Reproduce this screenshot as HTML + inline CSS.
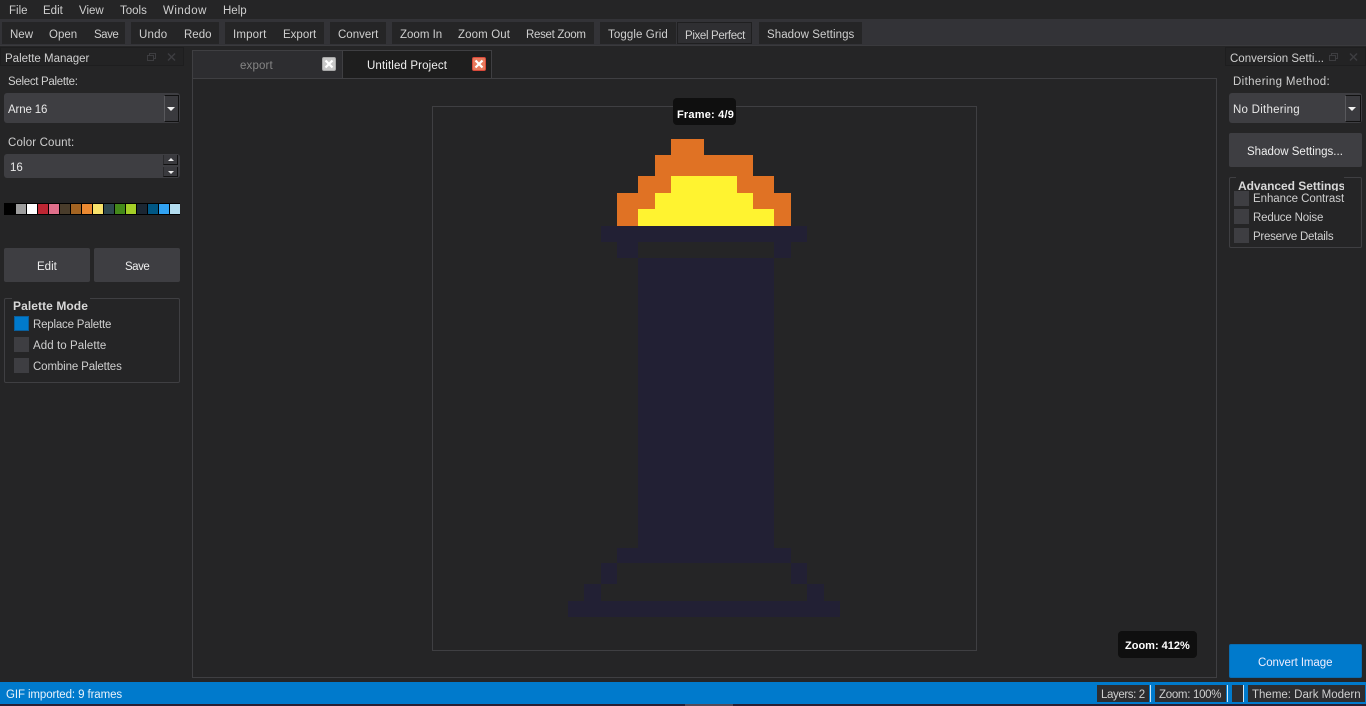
<!DOCTYPE html>
<html><head><meta charset="utf-8">
<style>
html,body{margin:0;padding:0;width:1366px;height:706px;overflow:hidden;background:#252526}
body{position:relative;font-family:"Liberation Sans",sans-serif;font-size:11.5px;color:#cfcfcf}
.b{position:absolute;box-sizing:border-box}
.t{position:absolute;white-space:nowrap;line-height:14px;margin-top:1px}
.p{position:absolute}
</style></head><body>
<!-- menu -->
<div class="b" style="left:0;top:0;width:1366px;height:19px;background:#252526"></div>
<span class="t" style="left:9px;top:3px">File</span>
<span class="t" style="left:43px;top:3px">Edit</span>
<span class="t" style="left:79px;top:3px">View</span>
<span class="t" style="left:120px;top:3px">Tools</span>
<span class="t" style="left:163px;top:3px;letter-spacing:.5px">Window</span>
<span class="t" style="left:223px;top:3px">Help</span>
<!-- toolbar -->
<div class="b" style="left:0;top:19px;width:1366px;height:27px;background:#333337;border-bottom:1px solid #3a3a3d"></div>
<div class="b" style="left:2px;top:22px;width:123px;height:22px;background:#252526"></div>
<div class="b" style="left:131px;top:22px;width:88px;height:22px;background:#252526"></div>
<div class="b" style="left:225px;top:22px;width:99px;height:22px;background:#252526"></div>
<div class="b" style="left:330px;top:22px;width:56px;height:22px;background:#252526"></div>
<div class="b" style="left:392px;top:22px;width:202px;height:22px;background:#252526"></div>
<div class="b" style="left:600px;top:22px;width:76px;height:22px;background:#252526"></div>
<div class="b" style="left:677px;top:22px;width:75px;height:22px;background:#2f2f32;border:1px solid #1f1f20"></div>
<div class="b" style="left:759px;top:22px;width:103px;height:22px;background:#252526"></div>
<span class="t" style="left:10px;top:27px">New</span>
<span class="t" style="left:49px;top:27px">Open</span>
<span class="t" style="left:94px;top:27px;letter-spacing:-.5px">Save</span>
<span class="t" style="left:139px;top:27px;letter-spacing:.2px">Undo</span>
<span class="t" style="left:184px;top:27px">Redo</span>
<span class="t" style="left:233px;top:27px;letter-spacing:.15px">Import</span>
<span class="t" style="left:283px;top:27px">Export</span>
<span class="t" style="left:338px;top:27px">Convert</span>
<span class="t" style="left:400px;top:27px">Zoom In</span>
<span class="t" style="left:458px;top:27px;letter-spacing:.12px">Zoom Out</span>
<span class="t" style="left:526px;top:27px;letter-spacing:-.3px">Reset Zoom</span>
<span class="t" style="left:608px;top:27px;letter-spacing:.1px">Toggle Grid</span>
<span class="t" style="left:685px;top:28px;letter-spacing:-.35px">Pixel Perfect</span>
<span class="t" style="left:767px;top:27px;letter-spacing:.07px">Shadow Settings</span>
<!-- left panel -->
<div class="b" style="left:0;top:47px;width:184px;height:19px;background:#232324;border:1px solid #1e1e1f"></div>
<span class="t" style="left:5px;top:51px">Palette Manager</span>
<svg class="p" style="left:146px;top:52px" width="30" height="11" fill="none" stroke="#3d3d40"><rect x="1.5" y="3.5" width="6" height="5"/><path d="M3.5 3V1.500H9.500V6.500H8"/><path d="M22 1.500l7 7M29 1.500l-7 7" stroke-width="1.500"/></svg>
<span class="t" style="left:8px;top:74px;letter-spacing:-.3px">Select Palette:</span>
<div class="b" style="left:4px;top:93px;width:176px;height:30px;background:#3e3e42;border-radius:3px"></div>
<div class="b" style="left:164px;top:95px;width:15px;height:27px;background:#3a3a3e;border-left:1px solid #58585c;border-right:1px solid #111;border-bottom:1px solid #111;border-top:1px solid #111"></div>
<div class="b" style="left:167px;top:107px;width:0;height:0;border-left:4px solid transparent;border-right:4px solid transparent;border-top:4px solid #f0f0f0"></div>
<span class="t" style="left:8px;top:102px;color:#e8e8e8;letter-spacing:-.15px">Arne 16</span>
<span class="t" style="left:8px;top:135px;letter-spacing:.15px">Color Count:</span>
<div class="b" style="left:4px;top:154px;width:176px;height:24px;background:#3e3e42;border-radius:3px"></div>
<div class="b" style="left:163px;top:155px;width:15px;height:10px;background:#3a3a3e;border-right:1px solid #111;border-bottom:1px solid #111;border-left:1px solid #2a2a2c"></div>
<div class="b" style="left:163px;top:167px;width:15px;height:10px;background:#3a3a3e;border-right:1px solid #111;border-bottom:1px solid #111;border-left:1px solid #2a2a2c"></div>
<div class="b" style="left:168px;top:158px;width:0;height:0;border-left:3px solid transparent;border-right:3px solid transparent;border-bottom:3px solid #eee"></div>
<div class="b" style="left:168px;top:171px;width:0;height:0;border-left:3px solid transparent;border-right:3px solid transparent;border-top:3px solid #eee"></div>
<span class="t" style="left:10px;top:160px;color:#e8e8e8">16</span>
<!-- palette -->
<div class="b" style="left:4px;top:203px;width:176px;height:12px;background:#000"></div>
<div class="p" style="left:4px;top:204px;width:11px;height:10px;background:#000"></div>
<div class="p" style="left:16px;top:204px;width:10px;height:10px;background:#9d9d9d"></div>
<div class="p" style="left:27px;top:204px;width:10px;height:10px;background:#fff"></div>
<div class="p" style="left:38px;top:204px;width:10px;height:10px;background:#be2633"></div>
<div class="p" style="left:49px;top:204px;width:10px;height:10px;background:#e06f8b"></div>
<div class="p" style="left:60px;top:204px;width:10px;height:10px;background:#493c2b"></div>
<div class="p" style="left:71px;top:204px;width:10px;height:10px;background:#a46422"></div>
<div class="p" style="left:82px;top:204px;width:10px;height:10px;background:#eb8931"></div>
<div class="p" style="left:93px;top:204px;width:10px;height:10px;background:#f7e26b"></div>
<div class="p" style="left:104px;top:204px;width:10px;height:10px;background:#2f484e"></div>
<div class="p" style="left:115px;top:204px;width:10px;height:10px;background:#44891a"></div>
<div class="p" style="left:126px;top:204px;width:10px;height:10px;background:#a3ce27"></div>
<div class="p" style="left:137px;top:204px;width:10px;height:10px;background:#1b2632"></div>
<div class="p" style="left:148px;top:204px;width:10px;height:10px;background:#005784"></div>
<div class="p" style="left:159px;top:204px;width:10px;height:10px;background:#31a2f2"></div>
<div class="p" style="left:170px;top:204px;width:10px;height:10px;background:#b2dcef"></div>
<div class="b" style="left:4px;top:248px;width:86px;height:34px;background:#3e3e42;border-radius:2px"></div>
<div class="b" style="left:94px;top:248px;width:86px;height:34px;background:#3e3e42;border-radius:2px"></div>
<span class="t" style="left:37px;top:259px;color:#eee">Edit</span>
<span class="t" style="left:125px;top:259px;color:#eee;letter-spacing:-.5px">Save</span>
<!-- palette mode -->
<div class="b" style="left:4px;top:298px;width:176px;height:85px;border:1px solid #3f3f42;border-radius:2px"></div>
<div class="b" style="left:12px;top:296px;width:78px;height:4px;background:#252526"></div>
<span class="t" style="left:13px;top:298px;font-weight:bold;font-size:12px;color:#d8d8d8;letter-spacing:.08px">Palette Mode</span>
<div class="b" style="left:14px;top:316px;width:15px;height:15px;background:#007acc;border:1px solid #0a5f9c"></div>
<div class="b" style="left:14px;top:337px;width:15px;height:15px;background:#3e3e42"></div>
<div class="b" style="left:14px;top:358px;width:15px;height:15px;background:#3e3e42"></div>
<span class="t" style="left:33px;top:317px;letter-spacing:-.2px">Replace Palette</span>
<span class="t" style="left:33px;top:338px;letter-spacing:.08px">Add to Palette</span>
<span class="t" style="left:33px;top:359px;letter-spacing:-.13px">Combine Palettes</span>
<!-- tabs -->
<div class="b" style="left:192px;top:50px;width:150px;height:29px;background:#2d2d30;border-left:1px solid #3f3f42;border-top:1px solid #3f3f42"></div>
<div class="b" style="left:342px;top:50px;width:150px;height:29px;background:#1e1e1e;border-left:1px solid #3f3f42;border-right:1px solid #3f3f42;border-top:1px solid #3f3f42"></div>
<span class="t" style="left:240px;top:58px;color:#858585;letter-spacing:.15px">export</span>
<span class="t" style="left:367px;top:58px;color:#f0f0f0;letter-spacing:.13px">Untitled Project</span>
<svg class="p" style="left:322px;top:57px" width="14" height="14"><rect x=".5" y=".5" width="13" height="13" rx="1.500" fill="#c8c8c8" stroke="#a8a8a8"/><path d="M3.500 3.500l7 7M10.500 3.500l-7 7" stroke="#fff" stroke-width="2.200"/></svg>
<svg class="p" style="left:472px;top:57px" width="14" height="14"><rect x=".5" y=".5" width="13" height="13" rx="1.500" fill="#e87a5d" stroke="#d9493a"/><path d="M3.500 3.500l7 7M10.500 3.500l-7 7" stroke="#fff" stroke-width="2.200"/></svg>
<!-- pane -->
<div class="b" style="left:192px;top:78px;width:1025px;height:600px;border:1px solid #3f3f42"></div>
<div class="b" style="left:432px;top:106px;width:545px;height:545px;border:1px solid #3f3f42"></div>
<!-- sprite -->
<svg class="p" style="left:0;top:0" width="1366" height="706" shape-rendering="crispEdges">
<g fill="#e07224">
<rect x="671" y="139" width="33" height="16"/>
<rect x="655" y="155" width="98" height="21"/>
<rect x="638" y="176" width="136" height="17"/>
<rect x="617" y="193" width="174" height="33"/>
</g>
<g fill="#fff330">
<rect x="671" y="176" width="66" height="17"/>
<rect x="655" y="193" width="98" height="16"/>
<rect x="638" y="209" width="136" height="17"/>
</g>
<g fill="#222034">
<rect x="601" y="226" width="206" height="16"/>
<rect x="617" y="242" width="21" height="16"/>
<rect x="774" y="242" width="17" height="16"/>
<rect x="638" y="258" width="136" height="290"/>
<rect x="617" y="548" width="174" height="15"/>
<rect x="601" y="563" width="16" height="21"/>
<rect x="791" y="563" width="16" height="21"/>
<rect x="584" y="584" width="17" height="17"/>
<rect x="807" y="584" width="17" height="17"/>
<rect x="568" y="601" width="272" height="16"/>
</g>
</svg>
<!-- overlays -->
<div class="b" style="left:673px;top:98px;width:63px;height:27px;background:#0f0f0f;border-radius:4px"></div>
<span class="t" style="left:677px;top:107px;font-weight:bold;font-size:11px;color:#fff;letter-spacing:.2px">Frame: 4/9</span>
<div class="b" style="left:1118px;top:631px;width:79px;height:27px;background:#0f0f0f;border-radius:4px"></div>
<span class="t" style="left:1125px;top:638px;font-weight:bold;font-size:11px;color:#fff">Zoom: 412%</span>
<!-- right panel -->
<div class="b" style="left:1225px;top:47px;width:141px;height:19px;background:#232324;border:1px solid #1e1e1f"></div>
<span class="t" style="left:1230px;top:51px">Conversion Setti...</span>
<svg class="p" style="left:1328px;top:52px" width="34" height="11" fill="none" stroke="#3d3d40"><rect x="1.500" y="3.500" width="6" height="5"/><path d="M3.500 3V1.500H9.500V6.500H8"/><path d="M22 1.500l7 7M29 1.500l-7 7" stroke-width="1.500"/></svg>
<span class="t" style="left:1233px;top:74px;letter-spacing:.37px">Dithering Method:</span>
<div class="b" style="left:1229px;top:93px;width:133px;height:30px;background:#3e3e42;border-radius:3px"></div>
<div class="b" style="left:1345px;top:95px;width:16px;height:27px;background:#3a3a3e;border-left:1px solid #58585c;border-right:1px solid #111;border-bottom:1px solid #111;border-top:1px solid #111"></div>
<div class="b" style="left:1348px;top:107px;width:0;height:0;border-left:4px solid transparent;border-right:4px solid transparent;border-top:4px solid #f0f0f0"></div>
<span class="t" style="left:1233px;top:102px;color:#e8e8e8;letter-spacing:.25px">No Dithering</span>
<div class="b" style="left:1229px;top:133px;width:133px;height:34px;background:#3e3e42;border-radius:2px"></div>
<span class="t" style="left:1247px;top:144px;color:#eee">Shadow Settings...</span>
<div class="b" style="left:1229px;top:177px;width:133px;height:71px;border:1px solid #3f3f42;border-radius:2px"></div>
<div class="b" style="left:1236px;top:175px;width:108px;height:5px;background:#252526"></div>
<div class="p" style="left:1238px;top:178px;width:106px;height:13px;overflow:hidden"><span class="t" style="left:0;top:0;font-weight:bold;font-size:12px;color:#d8d8d8;letter-spacing:-.05px">Advanced Settings</span></div>
<div class="b" style="left:1234px;top:191px;width:15px;height:15px;background:#3e3e42"></div>
<div class="b" style="left:1234px;top:209px;width:15px;height:15px;background:#3e3e42"></div>
<div class="b" style="left:1234px;top:228px;width:15px;height:15px;background:#3e3e42"></div>
<span class="t" style="left:1253px;top:191px;letter-spacing:-.06px">Enhance Contrast</span>
<span class="t" style="left:1253px;top:210px;letter-spacing:-.17px">Reduce Noise</span>
<span class="t" style="left:1253px;top:229px;letter-spacing:-.25px">Preserve Details</span>
<div class="b" style="left:1229px;top:644px;width:133px;height:34px;background:#007acc;border:1px solid #0a6cb0;border-radius:2px"></div>
<span class="t" style="left:1258px;top:655px;color:#eef;letter-spacing:-.08px">Convert Image</span>
<!-- status -->
<div class="b" style="left:0;top:682px;width:1366px;height:22px;background:#007acc"></div>
<span class="t" style="left:6px;top:687px;color:#e8f2fa;letter-spacing:-.1px">GIF imported: 9 frames</span>
<div class="b" style="left:1097px;top:685px;width:52px;height:17px;background:#2d2d30"></div>
<div class="b" style="left:1155px;top:685px;width:71px;height:17px;background:#2d2d30"></div>
<div class="b" style="left:1232px;top:685px;width:11px;height:17px;background:#2d2d30"></div>
<div class="b" style="left:1248px;top:685px;width:117px;height:17px;background:#2d2d30"></div>
<div class="p" style="left:1150px;top:685px;width:1px;height:17px;background:#cfe6f6"></div>
<div class="p" style="left:1227px;top:685px;width:1px;height:17px;background:#cfe6f6"></div>
<div class="p" style="left:1243px;top:685px;width:1px;height:17px;background:#cfe6f6"></div>
<span class="t" style="left:1101px;top:687px;letter-spacing:-.4px">Layers: 2</span>
<span class="t" style="left:1159px;top:687px;letter-spacing:-.3px">Zoom: 100%</span>
<span class="t" style="left:1252px;top:687px">Theme: Dark Modern</span>
<div class="b" style="left:0;top:704px;width:1366px;height:2px;background:#2a1f33"></div>
<div class="b" style="left:685px;top:704px;width:48px;height:2px;background:#544a58"></div>
</body></html>
